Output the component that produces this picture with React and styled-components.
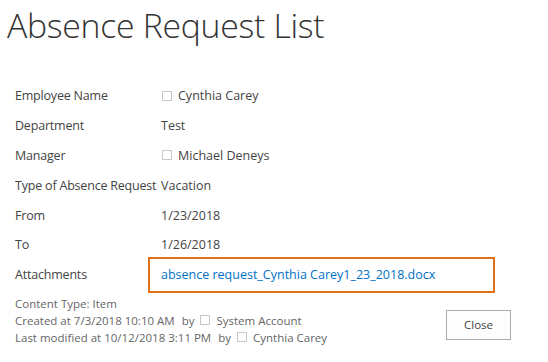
import React from "react";
import styled, { createGlobalStyle } from "styled-components";

const Global = createGlobalStyle`
  html, body { margin: 0; padding: 0; background: #fff; }
  body { font-family: "Open Sans", "Noto Sans", sans-serif; color: #444; }
`;

const Page = styled.div`
  width: 548px;
  height: 362px;
  overflow: hidden;
  display: flex;
  flex-direction: column;
`;

const Title = styled.h1`
  margin: 0;
  padding: 3px 0 0 7px;
  font-family: "Open Sans", sans-serif;
  font-weight: 300;
  font-size: 33.8px;
  line-height: 44px;
  color: #333;
  letter-spacing: -0.3px;
`;

const Form = styled.div`
  margin-top: 34px;
  padding-left: 15px;
  display: grid;
  grid-template-columns: 146px 1fr;
  grid-auto-rows: 29.8px;
  align-items: center;
  font-size: 12.5px;
`;

const Label = styled.div`
  color: #444;
  white-space: nowrap;
  letter-spacing: -0.2px;
`;

const Value = styled.div`
  color: #444;
  display: flex;
  align-items: center;
  gap: 6px;
`;

const Presence = styled.span`
  display: inline-block;
  width: 10px;
  height: 10px;
  border: 1px solid #c8c8c8;
  box-sizing: border-box;
  margin-left: 1px;
`;

const AttachBox = styled.div`
  margin-left: -13px;
  width: 347px;
  height: 36px;
  box-sizing: border-box;
  border: 2px solid #e07016;
  display: flex;
  align-items: center;
  padding-left: 11px;
`;

const Link = styled.a`
  color: #0072c6;
  text-decoration: none;
`;

const Footer = styled.div`
  display: flex;
  justify-content: space-between;
  align-items: flex-end;
  padding: 5px 37px 0 15px;
`;

const Meta = styled.div`
  font-size: 11.5px;
  line-height: 17px;
  color: #666;
`;

const MetaLine = styled.div`
  display: flex;
  align-items: center;
  white-space: pre;
`;

const By = styled.span`
  display: inline-flex;
  align-items: center;
  gap: 5px;
  margin-left: 7px;
`;

const Person = styled.span`
  margin-left: 6px;
`;

const Button = styled.button`
  width: 65px;
  height: 30px;
  margin-bottom: 6px;
  background: #fdfdfd;
  border: 1px solid #ababab;
  font-family: inherit;
  font-size: 11.5px;
  color: #444;
  padding: 0;
`;

const rows = [
  ["Employee Name", "Cynthia Carey", true],
  ["Department", "Test", false],
  ["Manager", "Michael Deneys", true],
  ["Type of Absence Request", "Vacation", false],
  ["From", "1/23/2018", false],
  ["To", "1/26/2018", false],
];

export default function App() {
  return (
    <Page>
      <Global />
      <Title>Absence Request List</Title>
      <Form>
        {rows.map(([l, v, p]) => (
          <React.Fragment key={l}>
            <Label>{l}</Label>
            <Value>
              {p && <Presence />}
              <span>{v}</span>
            </Value>
          </React.Fragment>
        ))}
        <Label>Attachments</Label>
        <AttachBox>
          <Link href="#">absence request_Cynthia Carey1_23_2018.docx</Link>
        </AttachBox>
      </Form>
      <Footer>
        <Meta>
          <div>Content Type: Item</div>
          <MetaLine>
            Created at 7/3/2018 10:10 AM
            <By>by<Presence /></By>
            <Person>System Account</Person>
          </MetaLine>
          <MetaLine>
            Last modified at 10/12/2018 3:11 PM
            <By>by<Presence /></By>
            <Person>Cynthia Carey</Person>
          </MetaLine>
        </Meta>
        <Button>Close</Button>
      </Footer>
    </Page>
  );
}
